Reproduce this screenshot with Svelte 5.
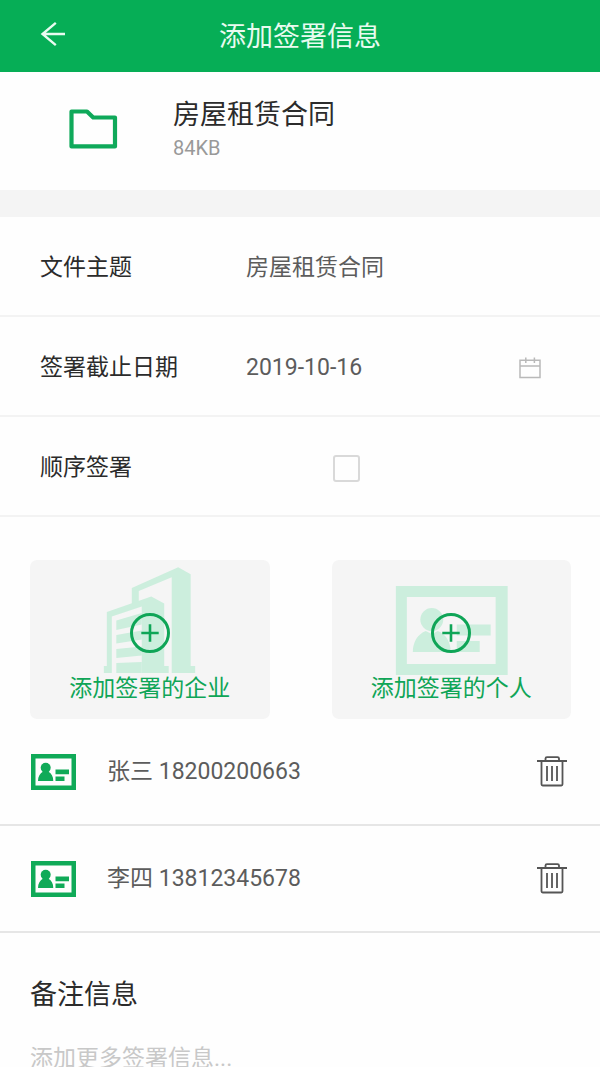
<script>
  let subject = $state('房屋租赁合同');
  let deadline = $state('2019-10-16');
  let ordered = $state(false);
  let remark = $state('');
  let signers = $state([
    { name: '张三', phone: '18200200663' },
    { name: '李四', phone: '13812345678' }
  ]);

  function removeSigner(phone) {
    signers = signers.filter((s) => s.phone !== phone);
  }
</script>

{#snippet plus()}
  <svg class="plus" viewBox="0 0 40 40" aria-hidden="true">
    <circle cx="20" cy="20" r="18.5" fill="none" stroke="#0fa557" stroke-width="3" />
    <path d="M11.3 20h17.4M20 11.3v17.4" stroke="#0fa557" stroke-width="2.6" />
  </svg>
{/snippet}

<div class="page">
  <header>
    <button class="back" type="button" aria-label="返回">
      <svg width="26" height="26" viewBox="0 0 26 26" aria-hidden="true">
        <path d="M25 13H2.500M15.800 1.800L2.500 13l13.300 11.200" fill="none" stroke="#e9fbf0" stroke-width="2.400" />
      </svg>
    </button>
    <h1>添加签署信息</h1>
  </header>

  <main>
    <section class="file">
      <svg class="folder" width="50" height="42" viewBox="0 0 50 42" aria-hidden="true">
        <path d="M3.500 3.500H19L25.200 9.500H47V38.400H3.500Z" fill="none" stroke="#0fa95a" stroke-width="4.200" stroke-linejoin="round" />
      </svg>
      <div>
        <h2>房屋租赁合同</h2>
        <p>84KB</p>
      </div>
    </section>

    <form onsubmit={(e) => e.preventDefault()}>
      <div class="row">
        <label for="subject">文件主题</label>
        <input id="subject" type="text" bind:value={subject} />
      </div>
      <div class="row">
        <label for="deadline">签署截止日期</label>
        <input id="deadline" type="text" bind:value={deadline} />
        <button class="calendar" type="button" aria-label="选择日期">
          <svg width="22" height="22" viewBox="0 0 22 22" aria-hidden="true">
            <path d="M1 3.200H21V20.400H1ZM1 9H21M6.800 .5V6M15.400 .5V6" fill="none" stroke="#b9b9b9" stroke-width="1.500" />
          </svg>
        </button>
      </div>
      <div class="row">
        <label for="ordered">顺序签署</label>
        <div class="tick"><input id="ordered" type="checkbox" bind:checked={ordered} /></div>
      </div>

      <div class="cards">
        <button class="card" type="button">
          <svg class="art" viewBox="0 0 240 160" aria-hidden="true">
            <path fill="#cceedd" d="M102 46V28L148.500 7L161 14V106H165.500V113H142V17L109 31V46Z" />
            <path fill="#cceedd" d="M74 113V106H77V52L121.500 36.500L134.500 43.500V106H139V113H112V46.500L82 56.500V113Z" />
            <path fill="#cceedd" d="M86.500 60.500L112 53V64.500L86.500 70ZM86.500 75L112 70.500V79.500L86.500 83.500ZM86.500 89L112 86.500V95.500L86.500 98ZM86.500 103L112 102V113H86.500Z" />
          </svg>
          {@render plus()}
          <span>添加签署的企业</span>
        </button>
        <button class="card" type="button">
          <svg class="art" viewBox="0 0 240 160" aria-hidden="true">
            <path fill="#cceedd" fill-rule="evenodd" d="M64 26H176V115H64ZM75 37V104H164V37Z" />
            <circle cx="100" cy="59.500" r="11.500" fill="#cceedd" />
            <path fill="#cceedd" d="M81 92C81 82 86 74 94 71L100 74L106 71C114 74 119 82 119 92ZM125 64.500H159V75.500H125ZM125 81H148V92H125Z" />
          </svg>
          {@render plus()}
          <span>添加签署的个人</span>
        </button>
      </div>

      <ul>
        {#each signers as signer (signer.phone)}
          <li>
            <svg width="45" height="36" viewBox="0 0 45 36" aria-hidden="true">
              <path fill="#10aa58" fill-rule="evenodd" d="M0 0H45V36H0ZM4.500 4.500V31.500H40.500V4.500Z" />
              <circle cx="14.700" cy="13.700" r="5" fill="#10aa58" />
              <path fill="#10aa58" d="M7 27C7 22.500 9 19.300 12.300 17.500H17.100C20.400 19.300 22.300 22.500 22.300 27ZM24.500 15.600H38V20.200H24.500ZM24.500 22.600H33.500V27H24.500Z" />
            </svg>
            <span>{signer.name} {signer.phone}</span>
            <button type="button" aria-label="删除 {signer.name}" onclick={() => removeSigner(signer.phone)}>
              <svg width="30" height="31" viewBox="0 0 30 31" aria-hidden="true">
                <path d="M0 5H30M8.500 5V2.500Q8.500 1.200 10 1.200H20.500Q22 1.200 22 2.500V5M4.500 5V28.300Q4.500 29.500 5.700 29.500H24.300Q25.500 29.500 25.500 28.300V5M10 10V25M15 10V25M20 10V25" fill="none" stroke="#555" stroke-width="1.800" />
              </svg>
            </button>
          </li>
        {/each}
      </ul>

      <div class="remark">
        <label for="remark">备注信息</label>
        <textarea id="remark" rows="1" placeholder="添加更多签署信息..." bind:value={remark}></textarea>
      </div>
    </form>
  </main>
</div>

<style>
  :global(body) {
    margin: 0;
    background: #fefefe;
  }
  .page {
    height: 100vh;
    overflow: hidden;
    background: #fefefe;
    color: #2b2b2b;
    font: 23px/32px Roboto, "Noto Sans CJK SC", sans-serif;
  }
  * {
    box-sizing: border-box;
  }
  button,
  input,
  textarea {
    margin: 0;
    padding: 0;
    border: 0;
    background: none;
    color: inherit;
    font: inherit;
  }
  button {
    cursor: pointer;
  }
  svg {
    display: block;
    flex: none;
  }
  h1,
  h2,
  p,
  ul {
    margin: 0;
    padding: 0;
    font-weight: 400;
  }
  header {
    display: grid;
    grid-template-columns: 80px 1fr 80px;
    align-items: start;
    height: 72px;
    background: #06ae56;
    color: #e9fbf0;
  }
  .back {
    padding-left: 40px;
    height: 68px;
  }
  h1 {
    font-size: 27px;
    line-height: 74px;
    text-align: center;
  }
  .file {
    display: flex;
    align-items: center;
    gap: 55px;
    height: 145px;
    padding: 0 68px 4px;
    border-bottom: 27px solid #f4f4f4;
  }
  .file div {
    padding-top: 4px;
  }
  h2 {
    font-size: 27px;
    line-height: 34px;
  }
  p {
    color: #999;
    font-size: 20px;
    line-height: 32px;
  }
  .row {
    display: flex;
    align-items: center;
    height: 100px;
    padding: 4px 59px 0 40px;
    border-bottom: 2px solid #f3f3f3;
  }
  .row label {
    flex: none;
    width: 206px;
  }
  .row input[type="text"] {
    flex: 1;
    min-width: 0;
    color: #5c5c5c;
    outline: none;
  }
  .tick {
    flex: 1;
    padding-left: 87px;
  }
  .tick input {
    display: block;
    appearance: none;
    width: 27px;
    height: 27px;
    border: 2px solid #d9d9d9;
    border-radius: 3px;
  }
  .tick input:checked {
    background: #06ae56;
    border-color: #06ae56;
  }
  .cards {
    display: grid;
    grid-template-columns: 1fr 1fr;
    gap: 62px;
    padding: 43px 29px 0 30px;
  }
  .card {
    display: grid;
    grid-template-rows: 53px 40px 67px;
    justify-items: center;
    height: 159px;
    border-radius: 7px;
    background: #f5f5f5;
    color: #0fa557;
  }
  .art {
    grid-area: 1 / 1 / 4 / 2;
    height: 160px;
    max-width: 100%;
  }
  .plus {
    grid-area: 2 / 1;
    width: 40px;
    height: 40px;
  }
  .card span {
    grid-area: 3 / 1;
    padding-top: 20px;
  }
  li {
    display: flex;
    align-items: center;
    gap: 31px;
    height: 107px;
    padding: 0 33px 0 31px;
    border-bottom: 2px solid #e6e6e6;
    color: #5c5c5c;
  }
  li span {
    flex: 1;
  }
  .remark {
    display: grid;
    gap: 28px;
    padding: 42px 30px 0;
  }
  .remark label {
    font-size: 27px;
    line-height: 40px;
  }
  textarea {
    width: 100%;
    resize: none;
    outline: none;
  }
  textarea::placeholder {
    color: #c8c8c8;
    opacity: 1;
  }
</style>
